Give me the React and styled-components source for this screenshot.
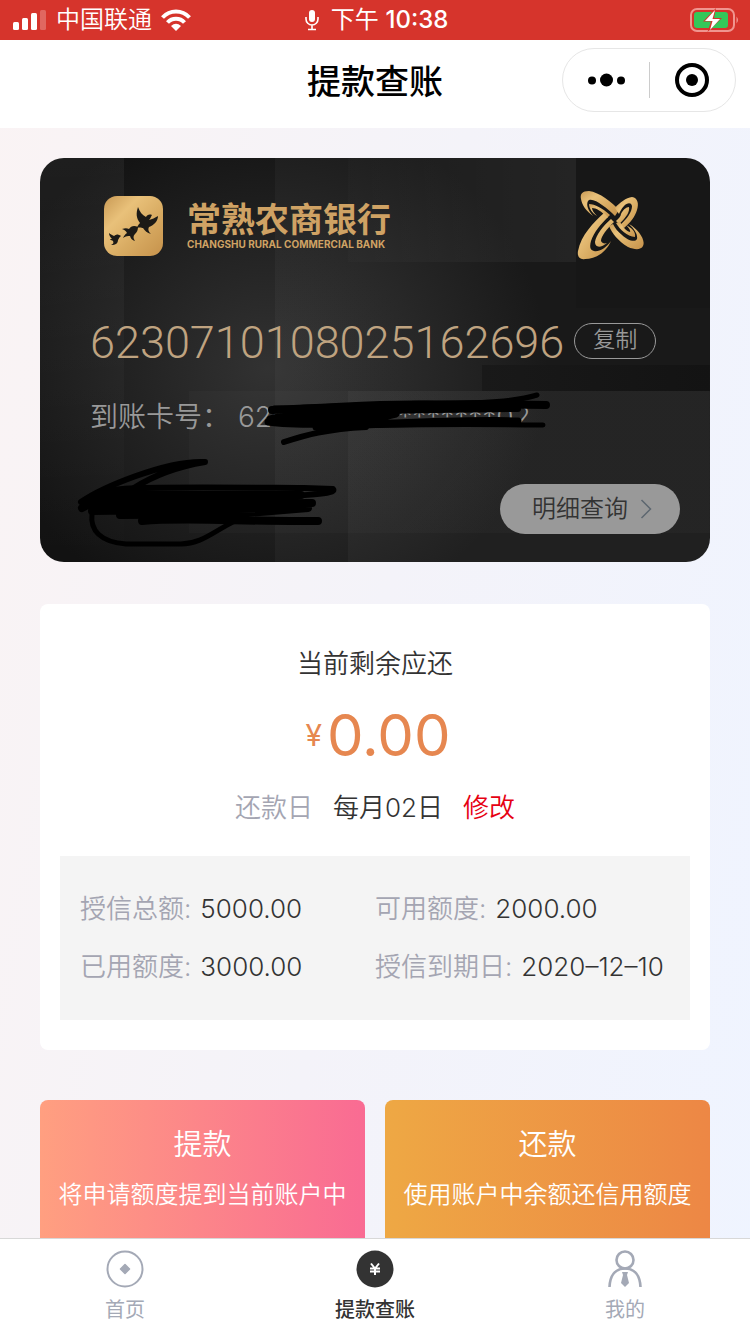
import styled, { createGlobalStyle } from "styled-components"

export default function App() {
    return (
        <Tela>
            <GlobalStyle />
            <BarraStatus />
            <Topo />
            <Conteudo>
                <Cartao />
                <Resumo />
                <Acoes>
                    <Acao $de="#ff9f80" $para="#f96b93">
                        <strong>提款</strong>
                        <span>将申请额度提到当前账户中</span>
                    </Acao>
                    <Acao $de="#eea844" $para="#ed8745">
                        <strong>还款</strong>
                        <span>使用账户中余额还信用额度</span>
                    </Acao>
                </Acoes>
            </Conteudo>
            <Menu />
        </Tela>
    )
}

function BarraStatus() {
    return (
        <Status>
            <Operadora>
                <svg width="34" height="20" viewBox="0 0 34 20" fill="#fff">
                    <rect x="0" y="12" width="6" height="8" rx="1.5" />
                    <rect x="9" y="8" width="6" height="12" rx="1.5" />
                    <rect x="18" y="3" width="6" height="17" rx="1.5" />
                    <rect x="27" y="0" width="6" height="20" rx="1.5" opacity=".25" />
                </svg>
                <span>中国联通</span>
                <svg width="30" height="22" viewBox="0 0 30 22" fill="none" stroke="#fff" strokeWidth="4">
                    <path d="M1.500 8.500C9 .5 21 .5 28.500 8.500" />
                    <path d="M6.500 13.500C11 8.500 19 8.500 23.500 13.500" />
                    <path d="M10 17Q15 12.500 20 17L15 22Z" fill="#fff" stroke="none" />
                </svg>
            </Operadora>
            <Hora>
                <svg width="14" height="22" viewBox="0 0 14 22" fill="none" stroke="#fff" strokeWidth="1.6">
                    <rect x="4" y="1" width="6" height="12" rx="3" fill="#fff" stroke="none" />
                    <path d="M1 8v2a6 6 0 0 0 12 0V8M7 16v4M3 20.500h8" />
                </svg>
                <span>下午 <b>10:38</b></span>
            </Hora>
            <svg width="50" height="26" viewBox="0 0 50 26">
                <rect x="1" y="2" width="43" height="22" rx="6" fill="none" stroke="#f0958f" strokeWidth="2" />
                <path d="M46.500 9.500q3 3.500 0 7z" fill="#f0958f" />
                <rect x="4" y="5" width="34" height="16" rx="3" fill="#34c759" />
                <path d="M26 1L13 14.500h8L17.500 25 32 11h-8z" fill="#d6342c" />
                <path d="M25 3L15 14h7.500L20 23 30 12H22.500z" fill="#fff" />
            </svg>
        </Status>
    )
}

function Topo() {
    return (
        <Cabecalho>
            <h1>提款查账</h1>
            <Capsula>
                <button aria-label="更多">
                    <svg width="38" height="14" viewBox="0 0 38 14">
                        <circle cx="5" cy="7.500" r="4" />
                        <circle cx="19.500" cy="7" r="6.500" />
                        <circle cx="34" cy="7.500" r="4" />
                    </svg>
                </button>
                <button aria-label="关闭">
                    <svg width="34" height="34" viewBox="0 0 34 34">
                        <circle cx="17" cy="17" r="15" fill="none" stroke="#000" strokeWidth="4" />
                        <circle cx="17" cy="17" r="6" />
                    </svg>
                </button>
            </Capsula>
        </Cabecalho>
    )
}

function Cartao() {
    return (
        <Caixa>
            <Marca>
                <Andorinhas />
                <NomeBanco>
                    <strong>常熟农商银行</strong>
                    <small>CHANGSHU RURAL COMMERCIAL BANK</small>
                </NomeBanco>
                <Emblema />
            </Marca>
            <LinhaNumero>
                <Numero>6230710108025162696</Numero>
                <Copiar>复制</Copiar>
            </LinhaNumero>
            <Destino>
                <span>到账卡号：</span>
                <span>62****************02</span>
                <Rabisco width="304" height="60" viewBox="0 0 304 60" $x={166} $y={-4}>
                    <path d="M18 17C80 16 110 11 170 12S262 10 281 4" strokeWidth="5" />
                    <path d="M16 19C90 17 150 11 290 14" strokeWidth="8" />
                    <path d="M30 22C80 23 120 19 262 18" strokeWidth="6" />
                    <path d="M14 28C30 22 90 26 140 23L110 30 40 31 12 31C60 38 200 27 262 30L100 34 60 36" strokeWidth="7" />
                    <path d="M70 36C140 33 200 33 287 34" strokeWidth="5" />
                    <path d="M28 51C50 44 70 38 110 36" strokeWidth="6" />
                </Rabisco>
            </Destino>
            <Rodape>
                <Titular>
                    <span>** ******</span>
                    <Rabisco width="264" height="96" viewBox="0 0 264 96" $x={-14} $y={-30}>
                        <path d="M5 48C25 34 90 6 129 8C105 12 80 20 58 34" strokeWidth="6" />
                        <path d="M14 44C30 32 60 33 228 34L257 35C262 40 225 42 190 42" strokeWidth="6" />
                        <path d="M6 54L30 41H225L60 45 10 51 236 49 30 56 16 57 232 54 160 60 44 61" strokeWidth="8" />
                        <path d="M66 67C110 63 170 68 242 67" strokeWidth="8" />
                        <path d="M16 60C14 76 24 88 50 90H105C128 90 140 74 170 62" strokeWidth="5" />
                    </Rabisco>
                </Titular>
                <Detalhes>
                    明细查询
                    <svg width="12" height="20" viewBox="0 0 12 20" fill="none" stroke="#5d6770" strokeWidth="1.500">
                        <path d="M1.500 1l9 9-9 9" />
                    </svg>
                </Detalhes>
            </Rodape>
        </Caixa>
    )
}

function Andorinhas() {
    return (
        <svg width="60" height="60" viewBox="0 0 60 60">
            <defs>
                <linearGradient id="ouro" x1="0" y1="0" x2="1" y2="1">
                    <stop offset="0" stopColor="#c99a55" />
                    <stop offset=".3" stopColor="#e9c17a" />
                    <stop offset=".6" stopColor="#d9ac63" />
                    <stop offset="1" stopColor="#c6924b" />
                </linearGradient>
            </defs>
            <rect x="0" y="0" width="59" height="60" rx="13" fill="url(#ouro)" />
            <g fill="#1c1a16">
                <path d="M34 11C32 17 32 22 36 27C34 29 33 31 33 32C36 31 38 32 39 32C41 35 43 37 47 38C44 35 44 33 45 31C50 29 54 25 54 20C51 22 48 23 45 24C47 22 47 20 48 19C45 18 43 19 42 21C38 19 36 16 34 11Z" />
                <path d="M34 31C30 29 27 30 25 33C23 32 21 32 18 33C21 34 22 35 23 37C21 38 20 40 19 42C22 40 24 40 26 40C27 43 28 44 31 45C29 42 29 40 31 38C33 36 34 34 34 31Z" />
                <path d="M17 40C14 38 12 38 10 40C8 39 6 38 5 37C5 39 6 41 8 43C7 43 6 43 6 44C7 44 8 44 9 45C10 47 9 48 7 49C12 49 14 47 14 44C15 43 15 41 17 40Z" />
            </g>
        </svg>
    )
}

function Emblema() {
    return (
        <svg width="68" height="70" viewBox="0 0 68 70">
            <g fill="url(#ouro)">
                <path d="M42 19C36 12 22 1 12 0C5 0 3 3 4 8C5 14 9 20 16 25C11 19 9 14 11 10C13 7 20 10 25 14C30 17 34 21 38 25Z" />
                <path d="M12 13C18 13 25 17 33 24L30 27C25 20 19 17 15 17C15 19 17 22 20 25C15 22 12 17 12 13Z" />
                <path d="M38 17C43 11 49 7 55 6C61 7 62 13 60 19C58 26 53 32 47 37L43 34C50 28 55 21 55 15C54 11 50 12 47 15C44 18 43 21 42 23Z" />
                <path d="M44 23C46 19 49 16 52 16C53 20 50 26 42 33L39 30C42 27 44 25 44 23Z" />
                <path d="M27 22C17 31 4 44 1 60C0 66 3 69 8 68C18 68 29 62 34 50C28 58 22 61 17 60C12 59 13 54 14 50C17 41 24 33 31 26Z" />
                <path d="M34 28C26 35 19 44 18 51C18 57 24 57 30 52C27 53 25 52 24 50C24 45 30 38 37 31Z" />
                <path d="M32 35C35 42 41 50 51 56C58 59 64 59 66 55C69 49 61 38 52 33C57 38 61 43 60 48C58 52 50 49 45 44C41 41 38 37 36 33Z" />
                <path d="M39 32C43 39 50 45 58 46C59 41 55 37 49 34C52 37 54 40 53 41C49 40 46 36 43 31Z" />
            </g>
        </svg>
    )
}

function Resumo() {
    return (
        <Painel>
            <h2>当前剩余应还</h2>
            <Valor><small>¥</small>0.00</Valor>
            <Vencimento>
                <span>还款日</span>
                <b>每月02日</b>
                <a href="#modificar">修改</a>
            </Vencimento>
            <Limites>
                <Limite><dt>授信总额:</dt><dd>5000.00</dd></Limite>
                <Limite><dt>可用额度:</dt><dd>2000.00</dd></Limite>
                <Limite><dt>已用额度:</dt><dd>3000.00</dd></Limite>
                <Limite><dt>授信到期日:</dt><dd>2020–12–10</dd></Limite>
            </Limites>
        </Painel>
    )
}

function Menu() {
    return (
        <Abas>
            <Aba href="#inicio">
                <svg width="38" height="38" viewBox="0 0 38 38">
                    <circle cx="19" cy="19" r="17.500" fill="none" stroke="#a4a9b6" strokeWidth="2" />
                    <path d="M19 14.500l4.500 4.500-4.500 4.500-4.500-4.500z" fill="#a4a9b6" stroke="#a4a9b6" strokeWidth="1.500" strokeLinejoin="round" />
                </svg>
                首页
            </Aba>
            <Aba href="#conta" $ativa>
                <svg width="38" height="38" viewBox="0 0 38 38">
                    <circle cx="19" cy="19" r="18.500" fill="#333" />
                    <path d="M15 13.500l4 5 4-5M14 18.500h10M14 21.500h10M19 18.500v6.500" fill="none" stroke="#fff" strokeWidth="2" />
                </svg>
                提款查账
            </Aba>
            <Aba href="#perfil">
                <svg width="38" height="38" viewBox="0 0 38 38" fill="none" stroke="#a4a9b6" strokeWidth="2.600">
                    <circle cx="19" cy="10" r="8.500" />
                    <path d="M3.500 37C4 26 9 18.500 19 18.500S34 26 34.500 37" />
                    <path d="M16 22h6l-1 3 2 8-4 4-4-4 2-8z" fill="#a4a9b6" stroke="none" />
                </svg>
                我的
            </Aba>
        </Abas>
    )
}

const GlobalStyle = createGlobalStyle`
    * {
        box-sizing: border-box;
        margin: 0;
        padding: 0;
    }

    body {
        font-family: Inter, "Noto Sans CJK SC", sans-serif;
        font-weight: 350;
        color: #333;
    }

    button {
        font-family: inherit;
        font-weight: inherit;
        background: none;
        border: none;
    }

    a {
        text-decoration: none;
    }

    svg {
        display: block;
        flex-shrink: 0;
    }
`;

const Tela = styled.div`
    display: flex;
    flex-direction: column;
    height: 100vh;
    background: linear-gradient(100deg, #faf3f4 0%, #f4f3f9 50%, #eff4ff 100%);
`;

const Status = styled.header`
    display: grid;
    grid-template-columns: 1fr auto 1fr;
    align-items: center;
    height: 40px;
    padding: 0 10px 0 13px;
    background: #d6342c;
    color: #fff;
    font-size: 24px;
    line-height: 40px;
    flex-shrink: 0;

    > svg {
        justify-self: end;
    }
`;

const Operadora = styled.div`
    display: flex;
    align-items: center;
    gap: 9px;
`;

const Hora = styled.div`
    display: flex;
    align-items: center;
    gap: 12px;
    font-weight: 400;

    b {
        font-weight: 500;
    }
`;

const Cabecalho = styled.div`
    display: grid;
    grid-template-columns: 1fr auto 1fr;
    align-items: center;
    height: 88px;
    padding: 0 14px;
    background: #fff;
    flex-shrink: 0;

    h1 {
        grid-column: 2;
        font-size: 34px;
        line-height: 40px;
        font-weight: 500;
        color: #000;
        padding-bottom: 4px;
    }
`;

const Capsula = styled.div`
    justify-self: end;
    display: flex;
    align-items: center;
    width: 174px;
    height: 64px;
    margin-bottom: 8px;
    border: 1px solid #e6e6e6;
    border-radius: 32px;

    button {
        flex: 1;
        height: 36px;
        display: flex;
        align-items: center;
        justify-content: center;
    }

    button + button {
        border-left: 1px solid #ccc;
    }
`;

const Conteudo = styled.main`
    flex: 1;
    min-height: 0;
    overflow-y: auto;
    scrollbar-width: none;
    padding: 30px 40px;
`;

const Caixa = styled.section`
    display: flex;
    flex-direction: column;
    height: 404px;
    padding: 33px 30px 28px 50px;
    border-radius: 24px;
    margin-bottom: 42px;
    overflow: hidden;
    background:
        linear-gradient(#171717, #171717) 100% 0 / 20% 150px no-repeat,
        linear-gradient(90deg, #191919, #131313) 100% 207px / 34% 26px no-repeat,
        linear-gradient(90deg, rgba(255, 255, 255, 0.01), rgba(255, 255, 255, 0.07)) 100% 0 / 54% 104px no-repeat,
        linear-gradient(rgba(255, 255, 255, 0.03), rgba(255, 255, 255, 0.03)) 100% 100% / 54% 171px no-repeat,
        linear-gradient(rgba(255, 255, 255, 0.03), rgba(255, 255, 255, 0.03)) 100% 100% / 65% 404px no-repeat,
        linear-gradient(rgba(255, 255, 255, 0.02), rgba(255, 255, 255, 0.02)) 149px 233px / 521px 142px no-repeat,
        linear-gradient(rgba(255, 255, 255, 0.05), rgba(255, 255, 255, 0)) 0 0 / 84px 404px no-repeat,
        radial-gradient(ellipse 280px 260px at 34% 52%, #323232, #121212);
`;

const Marca = styled.div`
    display: flex;
    align-items: center;
    height: 70px;
    padding: 0 35px 0 14px;

    > svg:last-child {
        margin-left: auto;
    }
`;

const NomeBanco = styled.div`
    display: flex;
    flex-direction: column;
    margin-left: 23px;
    color: #cfa264;

    strong {
        font-size: 34px;
        line-height: 36px;
        font-weight: 700;
    }

    small {
        font-size: 10px;
        line-height: 12px;
        font-weight: 700;
    }
`;

const LinhaNumero = styled.div`
    display: flex;
    align-items: center;
    gap: 10px;
    margin-top: 52px;
    height: 60px;
`;

const Numero = styled.p`
    font-family: Roboto, sans-serif;
    font-size: 45px;
    line-height: 60px;
    font-weight: 300;
    color: #bfa380;
`;

const Copiar = styled.button`
    width: 82px;
    height: 36px;
    margin-bottom: 4px;
    padding-bottom: 4px;
    border: 1px solid #999;
    border-radius: 18px;
    color: #999;
    font-size: 22px;
    line-height: 30px;
`;

const Destino = styled.div`
    position: relative;
    display: flex;
    gap: 8px;
    margin-top: 22px;
    font-size: 28px;
    line-height: 44px;
    color: #999;
`;

const Rabisco = styled.svg`
    position: absolute;
    left: ${({ $x }) => $x}px;
    top: ${({ $y }) => $y}px;
    fill: none;
    stroke: #000;
    stroke-linecap: round;
    stroke-linejoin: round;
`;

const Rodape = styled.div`
    display: flex;
    justify-content: space-between;
    align-items: flex-end;
    margin-top: auto;
`;

const Titular = styled.div`
    position: relative;
    height: 50px;
    padding-top: 6px;
    font-size: 28px;
    line-height: 44px;
    color: #bfa380;
`;

const Detalhes = styled.button`
    display: flex;
    align-items: center;
    justify-content: center;
    gap: 12px;
    width: 180px;
    height: 50px;
    padding-left: 4px;
    border-radius: 25px;
    background: #999;
    color: #333;
    font-size: 24px;
    line-height: 34px;
`;

const Painel = styled.section`
    background: #fff;
    border-radius: 8px;
    padding: 41px 20px 30px;
    margin-bottom: 50px;
    text-align: center;

    h2 {
        font-size: 26px;
        line-height: 38px;
        font-weight: 350;
    }
`;

const Valor = styled.p`
    display: flex;
    justify-content: center;
    align-items: center;
    gap: 5px;
    margin-top: 16px;
    padding-left: 6px;
    font-size: 58px;
    line-height: 72px;
    font-weight: 400;
    color: #e68750;

    small {
        font-size: 30px;
    }
`;

const Vencimento = styled.p`
    display: flex;
    justify-content: center;
    gap: 20px;
    margin-top: 18px;
    font-size: 26px;
    line-height: 38px;

    span {
        color: #a4a5b2;
    }

    b {
        font-weight: 350;
    }

    a {
        color: #e60012;
    }
`;

const Limites = styled.dl`
    display: grid;
    grid-template-columns: 295px 1fr;
    row-gap: 20px;
    margin-top: 29px;
    padding: 34px 20px;
    background: #f4f4f4;
`;

const Limite = styled.div`
    display: flex;
    gap: 9px;
    font-size: 26px;
    line-height: 38px;
    white-space: nowrap;

    dt {
        color: #a4a5b2;
    }
`;

const Acoes = styled.div`
    display: grid;
    grid-template-columns: 1fr 1fr;
    gap: 20px;
`;

const Acao = styled.button`
    display: flex;
    flex-direction: column;
    align-items: center;
    gap: 10px;
    padding: 24px 10px 46px;
    border-radius: 8px;
    background: linear-gradient(90deg, ${({ $de }) => $de}, ${({ $para }) => $para});
    color: #fff;

    strong {
        font-size: 29px;
        line-height: 42px;
        font-weight: 350;
    }

    span {
        font-size: 24px;
        line-height: 38px;
    }
`;

const Abas = styled.nav`
    display: grid;
    grid-template-columns: repeat(3, 1fr);
    height: 96px;
    border-top: 1px solid #d8d8d8;
    background: #fff;
    flex-shrink: 0;
`;

const Aba = styled.a`
    display: flex;
    flex-direction: column;
    align-items: center;
    gap: 8px;
    padding-top: 11px;
    font-size: 20px;
    line-height: 28px;
    color: ${({ $ativa }) => $ativa ? "#333" : "#a4a9b6"};
    font-weight: ${({ $ativa }) => $ativa ? 500 : 400};
`;
